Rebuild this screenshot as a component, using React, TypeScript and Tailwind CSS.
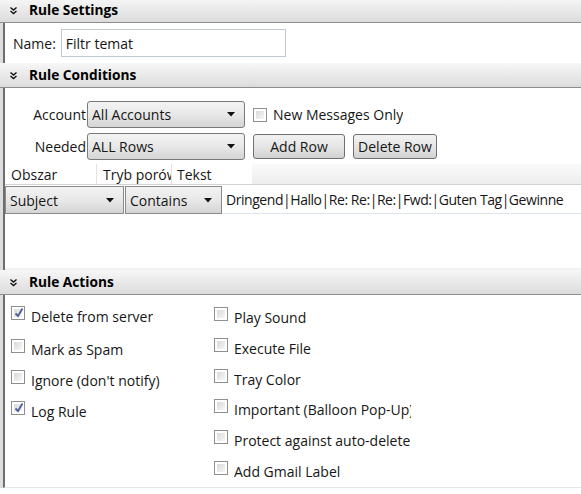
import React from "react";

const font = "font-['Segoe_UI','Open_Sans',Arial,sans-serif]";

const Chevrons: React.FC = () => (
  <svg width="9" height="9" viewBox="0 0 9 9" className="shrink-0">
    <path d="M1.5 1.5 L4.5 4 L7.5 1.5" stroke="#111" strokeWidth="1.4" fill="none" />
    <path d="M1.5 5 L4.5 7.5 L7.5 5" stroke="#111" strokeWidth="1.4" fill="none" />
  </svg>
);

const SectionHeader: React.FC<{ title: string; className?: string }> = ({ title, className = "" }) => (
  <div
    className={`flex items-center h-[25px] pl-[9px] gap-[11px] bg-gradient-to-b from-[#f7f7f7] to-[#dcdcdc] border-b border-[#8d8d8d] ${className}`}
  >
    <Chevrons />
    <span className="font-bold text-[13.7px] text-black leading-none">{title}</span>
  </div>
);

const Arrow: React.FC = () => (
  <svg width="8" height="5" viewBox="0 0 8 5" className="shrink-0">
    <path d="M0 0 L8 0 L4 4.5 Z" fill="#111" />
  </svg>
);

const Combo: React.FC<{ value: string; className?: string }> = ({ value, className = "" }) => (
  <div
    className={`flex items-center justify-between pl-[4px] pr-[9px] border border-[#7a7a7a] rounded-[3px] bg-gradient-to-b from-[#f3f3f3] via-[#e8e8e8] to-[#d5d5d5] ${className}`}
  >
    <span className="truncate">{value}</span>
    <Arrow />
  </div>
);

const Button: React.FC<{ label: string; className?: string }> = ({ label, className = "" }) => (
  <div
    className={`flex items-center justify-center border border-[#707070] rounded-[3px] bg-gradient-to-b from-[#f2f2f2] via-[#e6e6e6] to-[#d2d2d2] ${className}`}
  >
    {label}
  </div>
);

const Check: React.FC<{ checked?: boolean }> = ({ checked }) => (
  <div className="w-[14px] h-[14px] shrink-0 border border-[#8e8f8f] bg-white p-[2px]">
    <div className="w-full h-full bg-gradient-to-br from-[#d9d9d9] to-[#f7f7f7] relative">
      {checked && (
        <svg width="12" height="12" viewBox="0 0 12 12" className="absolute -left-[1px] -top-[2px]">
          <path d="M2.5 6.5 L5 9 L9.5 1.5" stroke="#4a5e9c" strokeWidth="1.8" fill="none" />
        </svg>
      )}
    </div>
  </div>
);

const CheckItem: React.FC<{ label: string; checked?: boolean; className?: string }> = ({
  label,
  checked,
  className = "",
}) => (
  <div className={`flex items-center gap-[6px] shrink-0 ${className}`}>
    <Check checked={checked} />
    <span className="whitespace-nowrap overflow-hidden">{label}</span>
  </div>
);

export default function App() {
  return (
    <div className={`w-[581px] h-[494px] overflow-hidden bg-[#dddddd] text-[14px] text-[#161616] ${font}`}>
      {/* Rule Settings */}
      <SectionHeader title="Rule Settings" className="-mt-[2px]" />
      <div className="ml-[3px] border-l-2 border-[#6e6e6e] bg-white h-[40px] flex items-center pl-[8px]">
        <span>Name:</span>
        <div className="ml-[5px] w-[225px] h-[28px] border border-[#c0c8d3] flex items-center pl-[4px] bg-white">
          Filtr temat
        </div>
      </div>

      {/* Rule Conditions */}
      <SectionHeader title="Rule Conditions" />
      <div className="ml-[3px] border-l-2 border-[#6e6e6e] bg-white h-[182px] flex flex-col">
        <div className="flex flex-col gap-[5px] pt-[13px]">
          <div className="flex items-center">
            <span className="w-[82px] text-right pr-[1px]">Account</span>
            <Combo value="All Accounts" className="w-[158px] h-[27px]" />
            <div className="ml-[8px]">
              <CheckItem label="New Messages Only" />
            </div>
          </div>
          <div className="flex items-center">
            <span className="w-[82px] text-right pr-[1px]">Needed</span>
            <Combo value="ALL Rows" className="w-[158px] h-[27px]" />
            <Button label="Add Row" className="ml-[8px] w-[92px] h-[25px]" />
            <Button label="Delete Row" className="ml-[8px] w-[84px] h-[25px]" />
          </div>
        </div>
        {/* grid header */}
        <div className="mt-[4px] flex h-[21px] border-b border-[#d2d2d2] bg-gradient-to-b from-[#fafafa] to-[#ededed]">
          <div className="w-[92px] pl-[6px] bg-white border-r border-[#e2e2e2] flex items-center">Obszar</div>
          <div className="w-[75px] pl-[6px] bg-white border-r border-[#e2e2e2] flex items-center overflow-hidden whitespace-nowrap">
            Tryb porów
          </div>
          <div className="w-[80px] pl-[5px] bg-white flex items-center">Tekst</div>
        </div>
        {/* grid row */}
        <div className="flex h-[29px] mt-[1px]">
          <Combo value="Subject" className="w-[119px] h-[28px] rounded-none border-[#8a8a8a]" />
          <Combo value="Contains" className="w-[97px] h-[28px] ml-[1px] rounded-none border-[#8a8a8a]" />
          <div className="flex-1 h-[28px] flex items-center pl-[4px] border-b border-[#dce4ee] whitespace-nowrap overflow-hidden tracking-[-0.45px]">
            Dringend|Hallo|Re: Re:|Re:|Fwd:|Guten Tag|Gewinne
          </div>
        </div>
        <div className="flex-1" />
        <div className="h-[3px] bg-gradient-to-b from-[#ffffff] to-[#ececec]" />
      </div>

      {/* Rule Actions */}
      <SectionHeader title="Rule Actions" />
      <div className="ml-[3px] border-l-2 border-[#6e6e6e] bg-white h-[193px] border-b border-b-[#e6e6e6] flex pl-[6px] pt-[11px] overflow-hidden">
        <div className="flex flex-col w-[203px]">
          <CheckItem label="Delete from server" checked className="h-[33px] items-start" />
          <CheckItem label="Mark as Spam" className="h-[31px] items-start" />
          <CheckItem label="Ignore (don't notify)" className="h-[31px] items-start" />
          <CheckItem label="Log Rule" checked className="h-[31px] items-start" />
        </div>
        <div className="flex flex-col w-[197px] pt-[1px]">
          {[
            "Play Sound",
            "Execute File",
            "Tray Color",
            "Important (Balloon Pop-Up)",
            "Protect against auto-delete",
            "Add Gmail Label",
          ].map((t) => (
            <CheckItem key={t} label={t} className="h-[30.8px] items-start" />
          ))}
        </div>
      </div>
      <div className="h-[10px] bg-white" />
    </div>
  );
}
